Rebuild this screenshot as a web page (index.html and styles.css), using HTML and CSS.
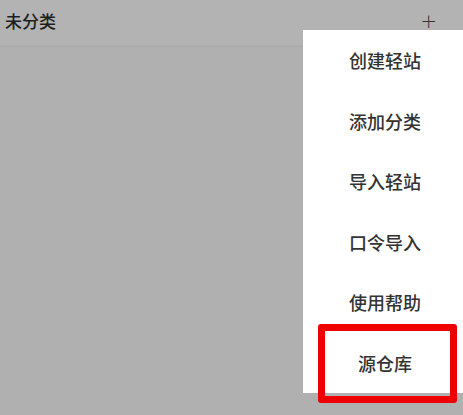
FILE: index.html
```html
<!DOCTYPE html>
<html>
<head>
  <title>未分类</title>
  <link rel="stylesheet" href="styles.css">
</head>
<body>
  <div class="page">
    <div class="header">
      <span class="title">未分类</span>
      <span class="plus">+</span>
    </div>

    <ul class="menu">
      <li class="item">创建轻站</li>
      <li class="item">添加分类</li>
      <li class="item">导入轻站</li>
      <li class="item">口令导入</li>
      <li class="item">使用帮助</li>
      <li class="item marked">源仓库</li>
    </ul>
  </div>
</body>
</html>
```

FILE: styles.css
```css
body {
  margin: 0;
  font-family: "Noto Sans CJK SC", "Noto Sans", sans-serif;
  background: #b0b0b0;
}

.page {
  position: relative;
  width: 463px;
  height: 415px;
  overflow: hidden;
}

.header {
  height: 47px;
  display: flex;
  align-items: flex-start;
  justify-content: space-between;
  padding: 9px 26px 0 5px;
  box-sizing: border-box;
  background: #b3b3b3;
  border-bottom: 2px solid #acacac;
}

.title {
  font-size: 17px;
  line-height: 24px;
  font-weight: 500;
  color: #1e1e1e;
}

.plus {
  font-size: 20px;
  line-height: 24px;
  color: #333;
  font-family: "DejaVu Sans", sans-serif;
  font-weight: 300;
}

/* popup menu */
.menu {
  position: absolute;
  top: 30px;
  left: 303px;
  right: 0;
  margin: 0;
  padding: 0;
  list-style: none;
  background: #fff;
}

.item {
  height: 60.5px;
  display: flex;
  align-items: center;
  justify-content: center;
  padding-left: 4px;
  font-size: 18px;
  font-weight: 500;
  color: #333;
}

.marked {
  position: relative;
}

.marked::after {
  content: "";
  position: absolute;
  top: -9px;
  left: 15px;
  right: 6px;
  bottom: -10px;
  border: 7px solid #ee0000;
  border-radius: 3px;
}
```
